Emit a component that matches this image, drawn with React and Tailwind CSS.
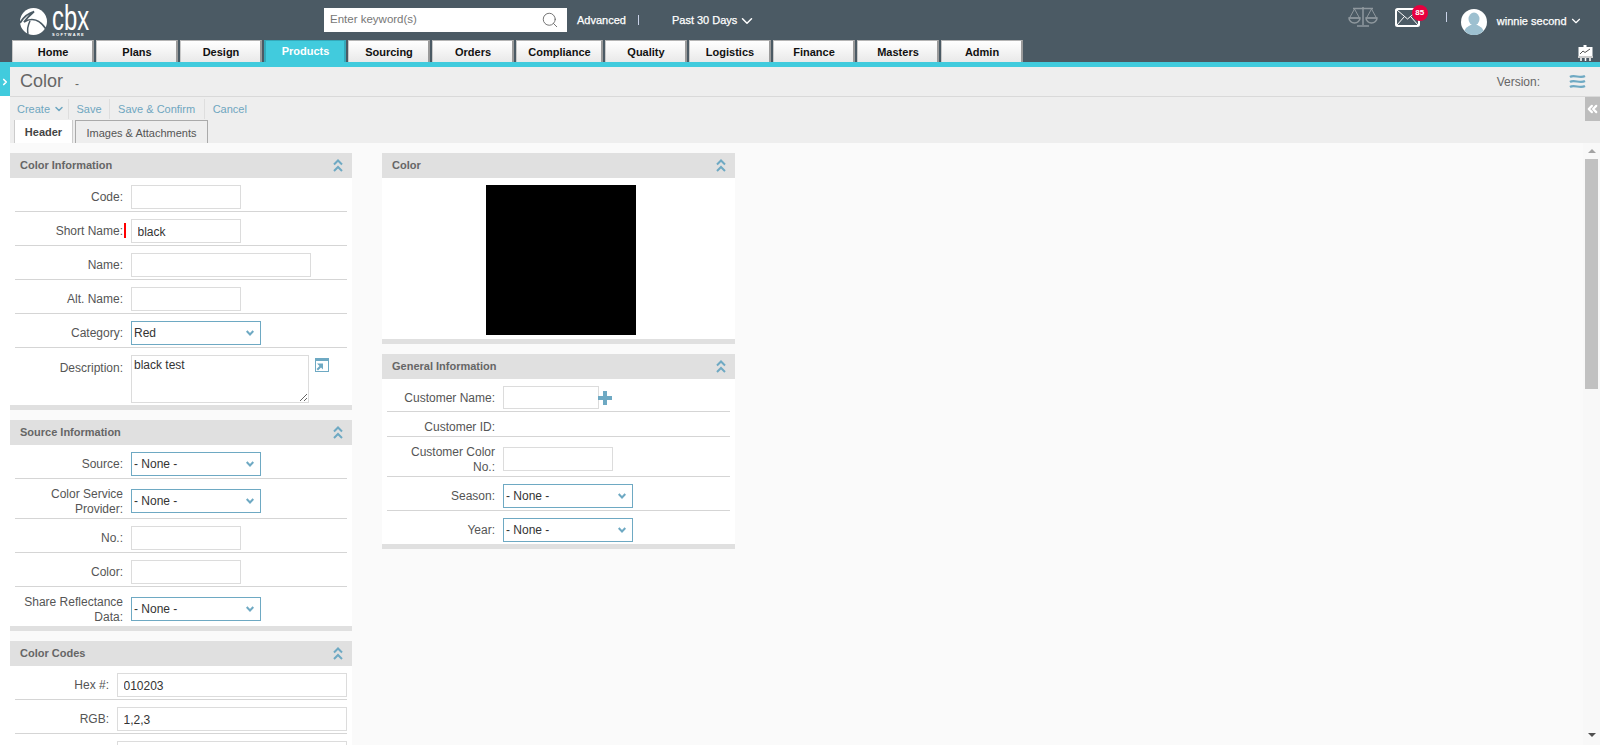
import { ChevronDown, ChevronRight, ChevronsLeft, Search } from 'lucide-react';

const tabs = ['Home', 'Plans', 'Design', 'Products', 'Sourcing', 'Orders', 'Compliance', 'Quality', 'Logistics', 'Finance', 'Masters', 'Admin'];

const inputCls = 'block h-6 border border-[#dcdcdc] bg-white text-xs text-[#333] outline-none';
const headerText = 'text-[11px] leading-[13px] text-white [-webkit-text-stroke:0.25px_white]';

function Logo() {
  return (
    <div className="ml-[20px] flex w-[80px] shrink-0 items-start">
      <svg width="27" height="27" viewBox="0 0 27 27" className="mt-[8px] shrink-0">
        <circle cx="13.500" cy="13.500" r="13.500" fill="#fff" />
        <path d="M0 15 C4 8 9 5 14 3.500 C10 7 7 10 4 14 C12 9 20 12 26 21" stroke="#4b5a64" strokeWidth="1.800" fill="none" />
        <path d="M8 26 C7 21 8 17 10 13" stroke="#4b5a64" strokeWidth="1.500" fill="none" />
      </svg>
      <div className="ml-[5px] w-[37px]">
        <div className="mt-[4px] h-[27px] w-[37px]">
          <span className="block origin-top-left scale-x-[.68] whitespace-nowrap text-[35px] leading-[27px] text-white">cbx</span>
        </div>
        <div className="mt-[2px] w-[37px] whitespace-nowrap text-[4px] leading-[4px] font-bold tracking-[1.300px] text-white">SOFTWARE</div>
      </div>
    </div>
  );
}

function ScaleIcon() {
  return (
    <svg width="30" height="21" viewBox="0 0 30 21" fill="none" stroke="#8f989e" strokeWidth="1.500">
      <path d="M15 1v18M9 20h12M5 2.500h20" />
      <path d="M6.500 3L1.500 12h10zM23.500 3L18.500 12h10z" strokeWidth="1" />
      <path d="M1 12a5.500 5 0 0 0 11 0zM18 12a5.500 5 0 0 0 11 0z" />
    </svg>
  );
}

function MailIcon() {
  return (
    <svg width="25" height="19" viewBox="0 0 25 19" fill="none" stroke="#fff">
      <rect x="1" y="1" width="23" height="17" rx="1.500" strokeWidth="2" />
      <path d="M2 2l10.500 9L23 2M2 17l7-8M23 17l-7-8" strokeWidth="1" />
    </svg>
  );
}

function Avatar() {
  return (
    <svg width="26" height="26" viewBox="0 0 26 26">
      <circle cx="13" cy="13" r="13" fill="#fff" />
      <ellipse cx="13" cy="10" rx="5.500" ry="6.500" fill="#9dc0d0" />
      <path d="M3.500 22c1-4 5-5 6-6h7c1 1 5 2 6 6a13 13 0 0 1-19 0z" fill="#9dc0d0" />
    </svg>
  );
}

function BoardIcon() {
  return (
    <svg width="15" height="16" viewBox="0 0 15 16">
      <rect x="5.500" y="0" width="3" height="2" fill="#fff" />
      <rect x="0.500" y="2" width="14" height="10" fill="#fff" />
      <rect x="0" y="11" width="15" height="2" fill="#ccc" />
      <path d="M2 9l3-3 2 1.500L12 4" stroke="#555" fill="none" />
      <path d="M3 13v3M7.500 13v3M12 13v3" stroke="#fff" strokeWidth="1.500" />
    </svg>
  );
}

function WavesIcon() {
  return (
    <svg width="17" height="15" viewBox="0 0 17 15" fill="none" stroke="#6ea9c3" strokeWidth="2.200">
      <path d="M1 3c4-3 10 2 15-1M1 8c4-3 10 2 15-1M1 13c4-3 10 2 15-1" />
    </svg>
  );
}

function PopoutIcon() {
  return (
    <svg width="14" height="14" viewBox="0 0 14 14">
      <rect x="0.500" y="0.500" width="13" height="13" fill="#fff" stroke="#6ea9c3" />
      <rect x="0" y="0" width="14" height="3" fill="#6ea9c3" />
      <path d="M2 5.500h6v6L6 9.500 3 12.500 1.500 11l3-3z" fill="#6ea9c3" />
    </svg>
  );
}

function DoubleUp() {
  return (
    <svg width="10" height="13" viewBox="0 0 10 13" fill="none" stroke="#6ea9c3" strokeWidth="2">
      <path d="M1 5.500L5 1.500l4 4M1 12L5 8l4 4" />
    </svg>
  );
}

function Header() {
  return (
    <div className="h-[62px] bg-[#4b5a64] flex flex-col">
      <div className="h-10 flex items-start">
        <Logo />
        <div className="ml-[224px] mt-2 flex h-6 w-[243px] items-center justify-between bg-white pl-[6px] pr-[8px] text-xs text-[#777]">
          <span className="text-[11.500px]">Enter keyword(s)</span>
          <Search size={18} strokeWidth={1.200} className="text-[#666]" />
        </div>
        <span className={'ml-[10px] mt-[14px] ' + headerText}>Advanced</span>
        <span className="ml-[12px] mt-[15px] h-[10px] w-px bg-[#c9d2e8]" />
        <div className={'ml-[33px] mt-[14px] flex items-center ' + headerText}>
          Past 30 Days
          <ChevronDown size={18} strokeWidth={2} className="-my-[3px] ml-px" />
        </div>
        <div className="ml-auto mr-[17px] flex items-start">
          <div className="mt-[6px]"><ScaleIcon /></div>
          <div className="relative ml-[17px] mt-[8px]">
            <MailIcon />
            <span className="absolute -top-[3px] left-[17px] flex h-4 w-4 items-center justify-center rounded-full bg-[#e8003f] text-[8px] font-bold text-white">85</span>
          </div>
          <span className="ml-[26px] mt-[12px] h-[10px] w-px bg-[#c9d2e8]" />
          <div className="ml-[14px] mt-[9px]"><Avatar /></div>
          <div className={'ml-[10px] mt-[14px] flex items-center ' + headerText}>
            winnie second
            <ChevronDown size={14} strokeWidth={2} className="ml-[2.500px]" />
          </div>
        </div>
      </div>
      <div className="flex h-[22px] pl-3 gap-[2px]">
        {tabs.map(t => {
          const active = t === 'Products';
          return (
            <div
              key={t}
              className={
                'flex justify-center pl-px text-[11px] font-bold leading-[15px] ' +
                (t === 'Compliance' ? 'w-[87px] ' : 'w-[82px] ') +
                (active
                  ? 'border-x-2 border-t border-[#34a9ba] bg-[#41cbdd] pt-[3px] text-white'
                  : 'border-t border-l border-t-[#b5b5b5] border-l-[#c8c8c8] border-r-2 border-r-[#9a9a9a] bg-gradient-to-b from-white to-[#e9e9e9] pt-[4px] text-[#111]')
              }
            >
              {t}
            </div>
          );
        })}
        <div className="ml-auto mr-[7px] mt-[5px]"><BoardIcon /></div>
      </div>
    </div>
  );
}

function SelectBox({ value, width = 'w-[130px]' }) {
  return (
    <div className={'relative h-6 ' + width}>
      <select
        defaultValue={value}
        className="block h-6 w-full appearance-none border border-[#6ea9c3] bg-white pl-[2px] text-xs text-[#333] outline-none"
      >
        <option>{value}</option>
      </select>
      <svg width="8" height="6" viewBox="0 0 8 6" fill="none" stroke="#6ea9c3" strokeWidth="2" className="pointer-events-none absolute right-[7px] top-[9px]">
        <path d="M.7 1l3.300 3.500L7.300 1" />
      </svg>
    </div>
  );
}

function Row({ label, tall, last, narrow, h, labelPad, children }) {
  const height = h || (tall ? (last ? 'h-[39px]' : 'h-[40px]') : (last ? 'h-[33px]' : 'h-[34px]'));
  return (
    <div className={'mx-[5px] flex gap-2 ' + height + (last ? '' : ' border-b border-[#d5d5d5]')}>
      <div className={'shrink-0 text-right text-xs leading-[15px] text-[#555] ' + (narrow ? 'w-[94px] ' : 'w-[108px] ') + (labelPad || (tall ? 'pt-[8px]' : 'pt-[12px]'))}>
        {label}
      </div>
      <div className={'flex min-w-0 flex-1 items-start ' + (tall ? 'pt-[10px]' : 'pt-[7px]')}>
        {children}
      </div>
    </div>
  );
}

function Panel({ title, className = '', children }) {
  return (
    <div className={'bg-white border-b-[5px] border-[#e0e0e0] ' + className}>
      <div className="flex h-[25px] items-center justify-between bg-[#e0e0e0] pl-[10px] pr-[9px]">
        <span className="text-[11px] font-bold text-[#666]">{title}</span>
        <DoubleUp />
      </div>
      {children}
    </div>
  );
}

function TextInput({ value = '', width = 'w-[110px]' }) {
  return <input readOnly value={value} className={inputCls + ' px-[5.500px] pt-[2px] ' + width} />;
}

export default function App() {
  return (
    <div className="h-[745px] overflow-hidden bg-white text-xs font-['Liberation_Sans',Arial,sans-serif]">
      <Header />
      <div className="h-[5px] bg-[#41cbdd]" />
      <div className="flex h-[678px]">
        <div className="w-[10px] shrink-0">
          <div className="flex h-[29px] items-center justify-center bg-[#41cbdd] text-white">
            <ChevronRight size={10} strokeWidth={4} />
          </div>
        </div>
        <div className="flex min-w-0 flex-1 flex-col">
          <div className="flex h-[30px] items-center border-b-[1px] border-[#d9d9d9] bg-[#eeeeee] pl-[10px] pr-[14px]">
            <span className="-mt-[2px] text-[18px] leading-[24px] text-[#666]">Color</span>
            <span className="ml-[12px] mt-[5px] text-xs text-[#666]">-</span>
            <span className="ml-auto mr-[29px] text-xs text-[#666]">Version:</span>
            <WavesIcon />
          </div>
          <div className="relative flex h-[23px] items-center bg-[#eeeeee] pt-[1px] text-[11px] text-[#6ea6c0]">
            <span className="ml-[7px] flex items-center">Create<ChevronDown size={12} strokeWidth={3} className="ml-[3px]" /></span>
            <span className="ml-[2.500px] h-[20px] w-px bg-[#dedede]" />
            <span className="ml-[8px]">Save</span>
            <span className="ml-[7.500px] h-[20px] w-px bg-[#dedede]" />
            <span className="ml-[8px]">Save &amp; Confirm</span>
            <span className="ml-[8.500px] h-[20px] w-px bg-[#dedede]" />
            <span className="ml-[8px]">Cancel</span>
            <div className="absolute right-0 top-0 flex h-6 w-[15px] items-center justify-center bg-[#bdbdbd] text-white">
              <ChevronsLeft size={16} strokeWidth={3.500} />
            </div>
          </div>
          <div className="flex h-[23px] items-end bg-[#eeeeee] pl-[4px] text-[11px]">
            <div className="flex h-[23px] w-[59px] justify-center border-x border-[#ccc] bg-white pt-[5px] font-bold text-[#444]">Header</div>
            <div className="ml-[2px] flex h-[23px] w-[133px] justify-center border border-b-0 border-[#aaa] pt-[5px] text-[#555]">Images &amp; Attachments</div>
          </div>
          <div className="flex min-h-0 flex-1">
            <div className="flex min-w-0 flex-1 items-start gap-[30px] overflow-hidden bg-[#fafafa] pt-[10px]">
              <div className="flex w-[342px] shrink-0 flex-col gap-[10px]">
                <Panel title="Color Information">
                  <Row label="Code:"><TextInput /></Row>
                  <Row label="Short Name:">
                    <div className="relative">
                      <span className="absolute -left-[7px] top-[4px] h-[15px] w-[2px] bg-[#f00]" />
                      <TextInput value="black" />
                    </div>
                  </Row>
                  <Row label="Name:"><TextInput width="w-[180px]" /></Row>
                  <Row label="Alt. Name:"><TextInput /></Row>
                  <Row label="Category:"><SelectBox value="Red" /></Row>
                  <Row label="Description:" h="h-[57px]" labelPad="pt-[13px]" last>
                    <textarea
                      readOnly
                      defaultValue="black test"
                      className="block h-12 w-[178px] border border-[#dcdcdc] bg-white px-[2px] py-px text-xs text-[#333] outline-none"
                    />
                    <div className="ml-[6px] mt-[3px]"><PopoutIcon /></div>
                  </Row>
                </Panel>
                <Panel title="Source Information">
                  <Row label="Source:"><SelectBox value="- None -" /></Row>
                  <Row label={<>Color Service<br />Provider:</>} tall><SelectBox value="- None -" /></Row>
                  <Row label="No.:"><TextInput /></Row>
                  <Row label="Color:"><TextInput /></Row>
                  <Row label={<>Share Reflectance<br />Data:</>} tall last><SelectBox value="- None -" /></Row>
                </Panel>
                <Panel title="Color Codes">
                  <Row label="Hex #:" narrow><TextInput value="010203" width="w-full" /></Row>
                  <Row label="RGB:" narrow><TextInput value="1,2,3" width="w-full" /></Row>
                  <Row label="" narrow><TextInput width="w-full" /></Row>
                </Panel>
              </div>
              <div className="flex w-[353px] shrink-0 flex-col gap-[10px]">
                <Panel title="Color">
                  <div className="pb-[4px] pl-[104px] pt-[7px]">
                    <div className="h-[150px] w-[150px] bg-black" />
                  </div>
                </Panel>
                <Panel title="General Information">
                  <Row label="Customer Name:" h="h-[33px]">
                    <div className="flex h-[23px] items-center">
                      <input readOnly className={inputCls + ' w-[96px] !h-[23px]'} />
                      <svg width="14" height="14" viewBox="0 0 14 14" fill="#6ea9c3" className="ml-[-1px]">
                        <path d="M5 0h4v5h5v4H9v5H5V9H0V5h5z" />
                      </svg>
                    </div>
                  </Row>
                  <div className="mx-[5px] flex h-[25px] gap-2 border-b border-[#d5d5d5]">
                    <div className="w-[108px] shrink-0 pt-[8px] text-right text-xs leading-[15px] text-[#555]">Customer ID:</div>
                  </div>
                  <Row label={<>Customer Color<br />No.:</>} tall><TextInput /></Row>
                  <Row label="Season:"><SelectBox value="- None -" /></Row>
                  <Row label="Year:" last><SelectBox value="- None -" /></Row>
                </Panel>
              </div>
            </div>
            <div className="flex w-[17px] shrink-0 flex-col items-center bg-[#f8f8f8]">
              <div className="mt-[6px] h-0 w-0 border-x-[4px] border-b-[4px] border-x-transparent border-b-[#a3a3a3]" />
              <div className="mt-[6px] h-[230px] w-[13px] bg-[#c1c1c1]" />
              <div className="mt-auto mb-[8px] h-0 w-0 border-x-[4px] border-t-[4px] border-x-transparent border-t-[#505050]" />
            </div>
          </div>
        </div>
      </div>
    </div>
  );
}
